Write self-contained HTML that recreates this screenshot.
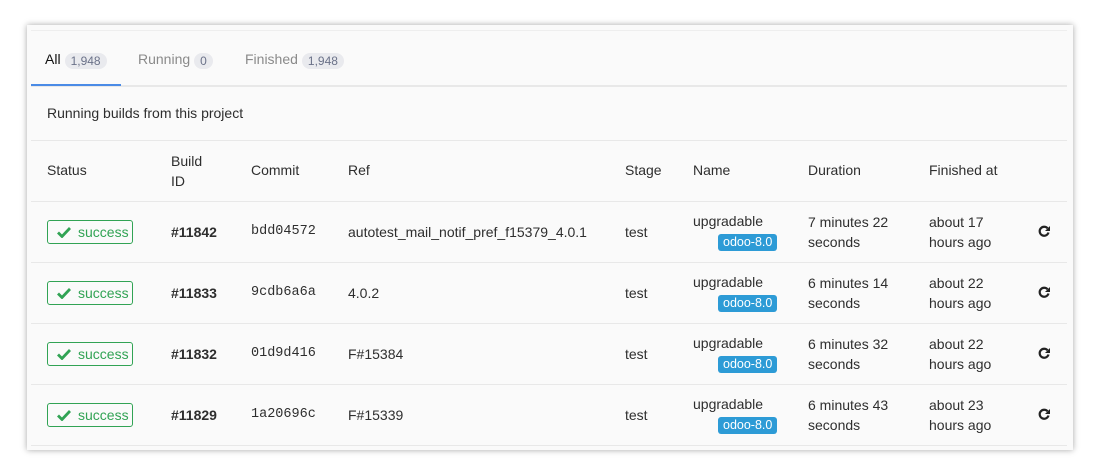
<!DOCTYPE html>
<html><head><style>
body{margin:0;width:1100px;height:474px;background:#fff;font-family:"Liberation Sans",sans-serif;font-size:14px;color:#2e2e2e;position:relative;overflow:hidden}
.card{position:absolute;left:27px;top:25px;width:1046px;height:425px;background:#fafafa;box-shadow:0 0 6px rgba(0,0,0,.35)}
.a{position:absolute;white-space:nowrap}
.cnt{display:inline-block;background:#e9eaee;color:#6b7289;font-size:12px;border-radius:9px;padding:1px 6px;margin-left:4px;vertical-align:-1px}
.hl{position:absolute;left:31px;width:1036px;height:1px;background:#e8e8e8}
.succ{position:absolute;left:47px;width:84px;height:22px;border:1px solid #31a354;border-radius:3px;color:#31a354;font-size:14px;line-height:22px;box-sizing:content-box}
.tag{position:absolute;background:#2d9bd6;color:#fff;font-size:12.5px;border-radius:3px;padding:0 5px;line-height:17px}
.mono{font-family:"Liberation Mono",monospace;font-size:13.5px}
</style></head><body>
<div class="card"></div>
<div class="hl" style="top:30px;background:#eee"></div>
<div class="a" style="left:45px;top:51px;color:#111">All<span class="cnt">1,948</span></div>
<div class="a" style="left:138px;top:51px;color:#8a8a8a">Running<span class="cnt">0</span></div>
<div class="a" style="left:245px;top:51px;color:#8a8a8a">Finished<span class="cnt">1,948</span></div>
<div class="hl" style="top:85px;height:2px"></div>
<div class="a" style="left:31px;top:84px;width:90px;height:2px;background:#4a8be6"></div>
<div class="a" style="left:47px;top:105px">Running builds from this project</div>
<div class="hl" style="top:140px"></div>
<div class="a" style="left:47px;top:162px">Status</div>
<div class="a" style="left:171px;top:151px;line-height:20px">Build<br>ID</div>
<div class="a" style="left:251px;top:162px">Commit</div>
<div class="a" style="left:348px;top:162px">Ref</div>
<div class="a" style="left:625px;top:162px">Stage</div>
<div class="a" style="left:693px;top:162px">Name</div>
<div class="a" style="left:808px;top:162px">Duration</div>
<div class="a" style="left:929px;top:162px">Finished at</div>

<div class="hl" style="top:201px"></div>
<div class="hl" style="top:262px"></div>
<div class="hl" style="top:323px"></div>
<div class="hl" style="top:384px"></div>
<div class="hl" style="top:445px"></div>

<div class="succ" style="top:220px"><svg style="position:absolute;left:9px;top:5px" width="14" height="12" viewBox="0 0 14 12"><path d="M1 6.5l4 4L13 2" stroke="#31a354" stroke-width="2.8" fill="none"/></svg><span style="position:absolute;left:30px">success</span></div>
<div class="a" style="left:171px;top:224px;font-weight:bold">#11842</div>
<div class="a mono" style="left:251px;top:224px">bdd04572</div>
<div class="a" style="left:348px;top:224px">autotest_mail_notif_pref_f15379_4.0.1</div>
<div class="a" style="left:625px;top:224px">test</div>
<div class="a" style="left:693px;top:213px">upgradable</div>
<div class="tag" style="left:718px;top:234px">odoo-8.0</div>
<div class="a" style="left:808px;top:212px;line-height:20px">7 minutes 22<br>seconds</div>
<div class="a" style="left:929px;top:212px;line-height:20px">about 17<br>hours ago</div>
<svg class="a" style="left:1038px;top:225px" width="13" height="13" viewBox="0 0 13 13"><path d="M10.5 7.5A4.5 4.5 0 1 1 9.6 3.3" stroke="#222" stroke-width="2.2" fill="none"/><path d="M12 1v5H7z" fill="#222"/></svg>

<div class="succ" style="top:281px"><svg style="position:absolute;left:9px;top:5px" width="14" height="12" viewBox="0 0 14 12"><path d="M1 6.5l4 4L13 2" stroke="#31a354" stroke-width="2.8" fill="none"/></svg><span style="position:absolute;left:30px">success</span></div>
<div class="a" style="left:171px;top:285px;font-weight:bold">#11833</div>
<div class="a mono" style="left:251px;top:285px">9cdb6a6a</div>
<div class="a" style="left:348px;top:285px">4.0.2</div>
<div class="a" style="left:625px;top:285px">test</div>
<div class="a" style="left:693px;top:274px">upgradable</div>
<div class="tag" style="left:718px;top:295px">odoo-8.0</div>
<div class="a" style="left:808px;top:273px;line-height:20px">6 minutes 14<br>seconds</div>
<div class="a" style="left:929px;top:273px;line-height:20px">about 22<br>hours ago</div>
<svg class="a" style="left:1038px;top:286px" width="13" height="13" viewBox="0 0 13 13"><path d="M10.5 7.5A4.5 4.5 0 1 1 9.6 3.3" stroke="#222" stroke-width="2.2" fill="none"/><path d="M12 1v5H7z" fill="#222"/></svg>

<div class="succ" style="top:342px"><svg style="position:absolute;left:9px;top:5px" width="14" height="12" viewBox="0 0 14 12"><path d="M1 6.5l4 4L13 2" stroke="#31a354" stroke-width="2.8" fill="none"/></svg><span style="position:absolute;left:30px">success</span></div>
<div class="a" style="left:171px;top:346px;font-weight:bold">#11832</div>
<div class="a mono" style="left:251px;top:346px">01d9d416</div>
<div class="a" style="left:348px;top:346px">F#15384</div>
<div class="a" style="left:625px;top:346px">test</div>
<div class="a" style="left:693px;top:335px">upgradable</div>
<div class="tag" style="left:718px;top:356px">odoo-8.0</div>
<div class="a" style="left:808px;top:334px;line-height:20px">6 minutes 32<br>seconds</div>
<div class="a" style="left:929px;top:334px;line-height:20px">about 22<br>hours ago</div>
<svg class="a" style="left:1038px;top:347px" width="13" height="13" viewBox="0 0 13 13"><path d="M10.5 7.5A4.5 4.5 0 1 1 9.6 3.3" stroke="#222" stroke-width="2.2" fill="none"/><path d="M12 1v5H7z" fill="#222"/></svg>

<div class="succ" style="top:403px"><svg style="position:absolute;left:9px;top:5px" width="14" height="12" viewBox="0 0 14 12"><path d="M1 6.5l4 4L13 2" stroke="#31a354" stroke-width="2.8" fill="none"/></svg><span style="position:absolute;left:30px">success</span></div>
<div class="a" style="left:171px;top:407px;font-weight:bold">#11829</div>
<div class="a mono" style="left:251px;top:407px">1a20696c</div>
<div class="a" style="left:348px;top:407px">F#15339</div>
<div class="a" style="left:625px;top:407px">test</div>
<div class="a" style="left:693px;top:396px">upgradable</div>
<div class="tag" style="left:718px;top:417px">odoo-8.0</div>
<div class="a" style="left:808px;top:395px;line-height:20px">6 minutes 43<br>seconds</div>
<div class="a" style="left:929px;top:395px;line-height:20px">about 23<br>hours ago</div>
<svg class="a" style="left:1038px;top:408px" width="13" height="13" viewBox="0 0 13 13"><path d="M10.5 7.5A4.5 4.5 0 1 1 9.6 3.3" stroke="#222" stroke-width="2.2" fill="none"/><path d="M12 1v5H7z" fill="#222"/></svg>
</body></html>
